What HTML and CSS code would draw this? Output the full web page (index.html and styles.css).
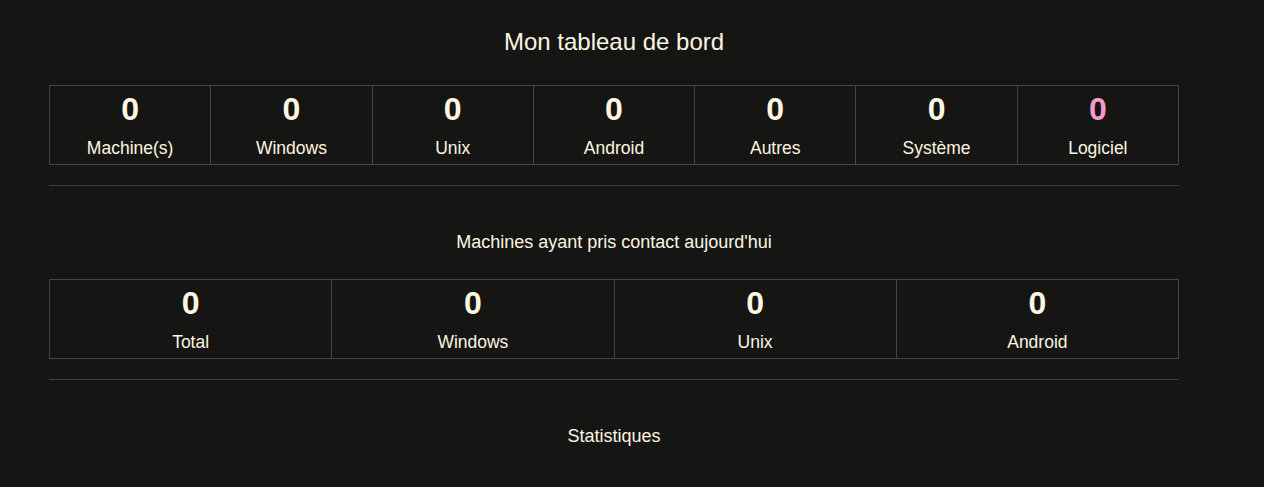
FILE: index.html
```html
<!DOCTYPE html>
<html lang="fr">
<head>
    <meta charset="UTF-8">
    <title>Mon tableau de bord</title>
    <link rel="stylesheet" href="styles.css">
</head>
<body>
    <div class="dashboard">
        <h1>Mon tableau de bord</h1>

        <table class="stats">
            <tr>
                <td><span class="count">0</span><span class="label">Machine(s)</span></td>
                <td><span class="count">0</span><span class="label">Windows</span></td>
                <td><span class="count">0</span><span class="label">Unix</span></td>
                <td><span class="count">0</span><span class="label">Android</span></td>
                <td><span class="count">0</span><span class="label">Autres</span></td>
                <td><span class="count">0</span><span class="label">Système</span></td>
                <td><span class="count soft">0</span><span class="label">Logiciel</span></td>
            </tr>
        </table>

        <hr>

        <h2>Machines ayant pris contact aujourd'hui</h2>

        <table class="stats">
            <tr>
                <td><span class="count">0</span><span class="label">Total</span></td>
                <td><span class="count">0</span><span class="label">Windows</span></td>
                <td><span class="count">0</span><span class="label">Unix</span></td>
                <td><span class="count">0</span><span class="label">Android</span></td>
            </tr>
        </table>

        <hr>

        <h2>Statistiques</h2>
    </div>
</body>
</html>
```

FILE: styles.css
```css
* {
    margin: 0;
    padding: 0;
    box-sizing: border-box;
}

body {
    background: #151514;
    color: #fdf6e0;
    font-family: 'Liberation Sans', Arial, sans-serif;
}

.dashboard {
    width: 1130px;
    margin-left: 49px;
    padding-top: 27px;
}

h1 {
    font-size: 24px;
    font-weight: 400;
    text-align: center;
    line-height: 30px;
    margin-bottom: 28px;
}

h2 {
    font-size: 18px;
    font-weight: 400;
    text-align: center;
    line-height: 20px;
    margin: 46px 0 27px;
}

.stats {
    width: 100%;
    table-layout: fixed;
    border-collapse: collapse;
    border: 1px solid #464646;
}

.stats td {
    border: 1px solid #464646;
    text-align: center;
    padding: 5px 0 6px;
}

.count {
    display: block;
    font-size: 32px;
    font-weight: 700;
    line-height: 37px;
}

.count.soft {
    color: #f59cc6;
}

.label {
    display: block;
    font-size: 17.5px;
    line-height: 20px;
    margin-top: 10px;
}

hr {
    border: none;
    border-top: 1px solid #3c3c3c;
    margin-top: 20px;
}
```
